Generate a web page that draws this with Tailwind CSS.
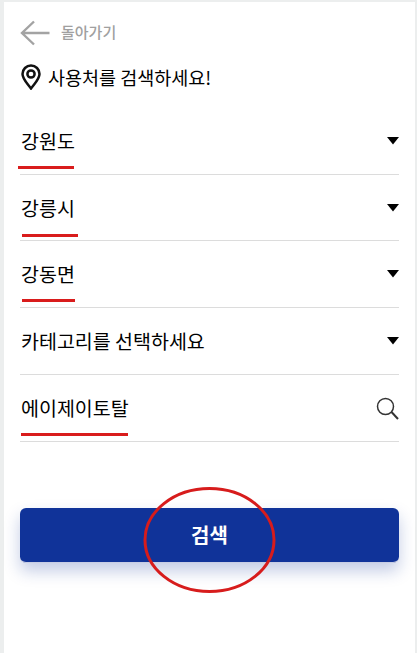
<!DOCTYPE html>
<html>
  <head>
    <meta charset="utf-8" />
    <title>사용처 검색</title>
    <script src="https://cdn.jsdelivr.net/npm/@tailwindcss/browser@4"></script>
  </head>
  <body class="bg-[#eceeee] overflow-hidden pt-[2px]">
    <div class="relative ml-[4px] mr-[2px] h-[651px] bg-white px-[16px] pt-[16px] font-['Noto_Sans_CJK_KR','Noto_Sans',sans-serif] text-black">
      <!-- back link -->
      <div class="flex h-[29px] items-center gap-[11px]">
        <svg class="w-[30px] h-[26px]" viewBox="0 0 30 26" fill="none" stroke="#a3a3a3" stroke-width="2.4">
          <path d="M29.500 13H2M14 1.500 2 13l12 11.500" />
        </svg>
        <span class="text-[15px] font-medium text-[#a0a0a0]">돌아가기</span>
      </div>
      <!-- heading -->
      <div class="flex h-[30px] mt-[15px] items-center gap-[7px]">
        <svg class="ml-[1px] w-[20px] h-[26px]" viewBox="0 0 20 26" fill="none" stroke="#111" stroke-width="2.5">
          <path d="M10 24.500C6 19 1.500 15 1.500 10a8.500 8.500 0 0 1 17 0c0 5-4.500 9-8.500 14.500z" />
          <circle cx="10" cy="10" r="3.600" />
        </svg>
        <span class="text-[18.500px] leading-[30px]">사용처를 검색하세요!</span>
      </div>

      <div class="mt-[16px]">
        <div class="relative flex h-[67px] items-center justify-between border-b border-[#dcdcdc] pl-[1px]">
          <span class="text-[19.500px]">강원도</span>
          <svg class="w-[12px] h-[8px]" viewBox="0 0 12 8" fill="#000"><path d="M0 0h12L6 7.500z" /></svg>
          <div class="absolute left-[-2px] bottom-[5px] h-[3px] w-[56px] bg-[#d91c1c]"></div>
        </div>
        <div class="relative flex h-[66px] items-center justify-between border-b border-[#dcdcdc] pl-[1px]">
          <span class="text-[19.500px]">강릉시</span>
          <svg class="w-[12px] h-[8px]" viewBox="0 0 12 8" fill="#000"><path d="M0 0h12L6 7.500z" /></svg>
          <div class="absolute left-[2px] bottom-[3px] h-[3px] w-[56px] bg-[#d91c1c]"></div>
        </div>
        <div class="relative flex h-[67px] items-center justify-between border-b border-[#dcdcdc] pl-[1px]">
          <span class="text-[19.500px]">강동면</span>
          <svg class="w-[12px] h-[8px]" viewBox="0 0 12 8" fill="#000"><path d="M0 0h12L6 7.500z" /></svg>
          <div class="absolute left-[2px] bottom-[5px] h-[3px] w-[53px] bg-[#d91c1c]"></div>
        </div>
        <div class="flex h-[67px] items-center justify-between border-b border-[#dcdcdc] pl-[1px]">
          <span class="text-[19.500px]">카테고리를 선택하세요</span>
          <svg class="w-[12px] h-[8px]" viewBox="0 0 12 8" fill="#000"><path d="M0 0h12L6 7.500z" /></svg>
        </div>
        <div class="relative flex h-[67px] items-center justify-between border-b border-[#dcdcdc] pl-[1px]">
          <span class="text-[19.500px]">에이제이토탈</span>
          <svg class="w-[23px] h-[23px]" viewBox="0 0 23 23" fill="none" stroke="#333" stroke-width="1.500">
            <circle cx="9.500" cy="9.500" r="8" /><path d="M15.500 15l6.500 7" stroke-width="2" />
          </svg>
          <div class="absolute left-[1px] bottom-[5px] h-[3px] w-[107px] bg-[#d91c1c]"></div>
        </div>
      </div>

      <button class="mt-[66px] block h-[55px] w-[379px] rounded-[6px] border-b border-[#c7cde4] bg-[#103399] text-[20px] font-bold text-white shadow-[0_8px_16px_rgba(16,51,153,0.25)]">검색</button>

      <!-- red annotation circle -->
      <svg class="absolute left-[139px] top-[484px] w-[133px] h-[108px]" viewBox="0 0 133 108" fill="none" stroke="#d71c1c" stroke-width="3">
        <ellipse cx="66.500" cy="54" rx="64.500" ry="51.500" />
      </svg>
    </div>
  </body>
</html>
